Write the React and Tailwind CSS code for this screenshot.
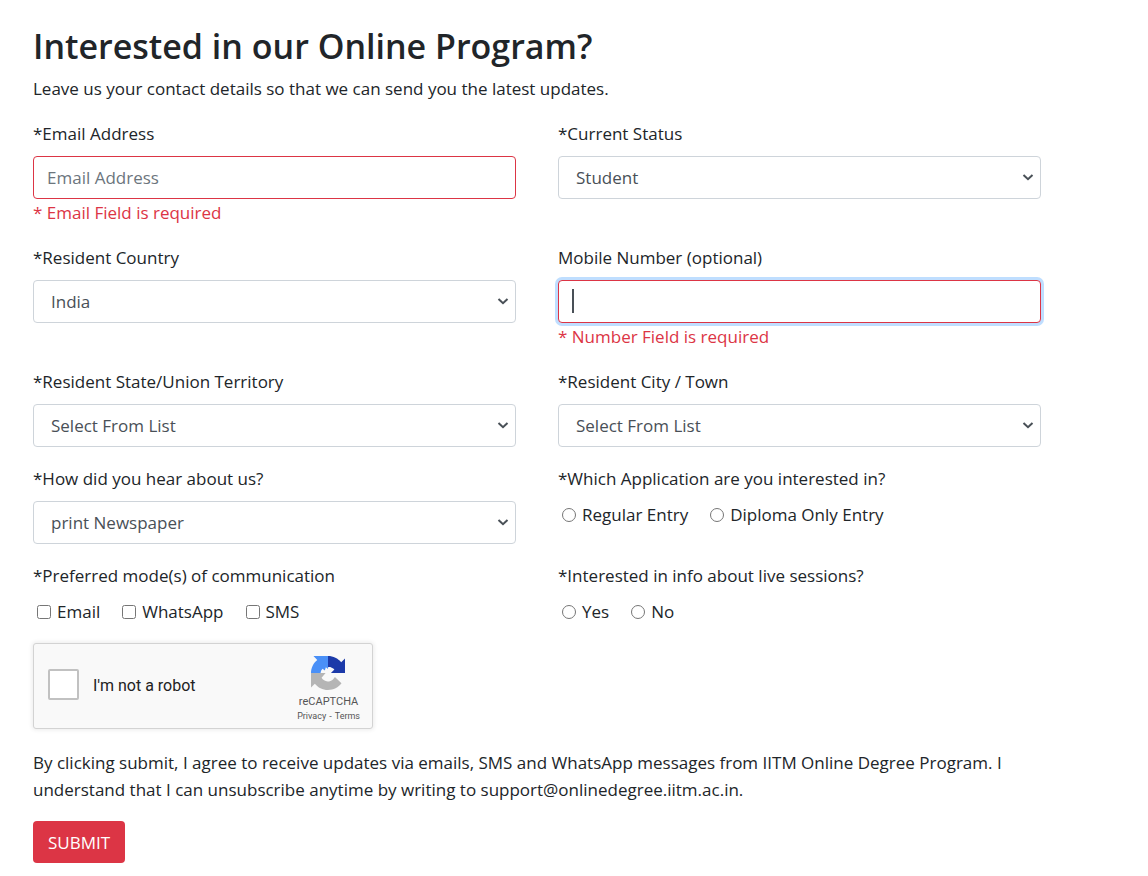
const control =
  "block h-[43px] w-full rounded border bg-white text-[#495057] outline-none";

function Field({ id, label, error, children }) {
  return (
    <div>
      <label htmlFor={id} className="mb-[9px] block">
        {label}
      </label>
      {children}
      {error && <p className="text-[#dc3545]">{error}</p>}
    </div>
  );
}

function SelectField({ id, label, options }) {
  return (
    <Field id={id} label={label}>
      <div className="relative">
        <select id={id} className={`${control} appearance-none border-[#ced4da] px-[17px]`}>
          {options.map((option) => (
            <option key={option}>{option}</option>
          ))}
        </select>
        <svg
          viewBox="0 0 12 8"
          className="pointer-events-none absolute top-[18px] right-[7px] h-2 w-3"
          fill="none"
          stroke="#495057"
          strokeWidth="2"
          aria-hidden="true"
        >
          <path d="M1.5 1L6 5.2L10.5 1" />
        </svg>
      </div>
    </Field>
  );
}

function Choices({ legend, type, name, options }) {
  return (
    <fieldset>
      <legend className="mb-[9px]">{legend}</legend>
      <div className="flex flex-wrap gap-x-[22px] pl-1">
        {options.map((option) => (
          <label key={option} className="flex items-center gap-[6px]">
            <input type={type} name={name} value={option} className="size-[14px]" />
            {option}
          </label>
        ))}
      </div>
    </fieldset>
  );
}

function Captcha() {
  return (
    <div className="flex h-[86px] w-full max-w-[340px] items-center rounded-[3px] border border-[#d3d3d3] bg-[#f9f9f9] pr-3 pl-[14px] font-[Roboto,sans-serif] shadow-[0_0_4px_1px_rgba(0,0,0,0.08)]">
      <label className="flex flex-1 items-center gap-[14px] pb-1 text-base leading-5 text-[#222222]">
        <input
          type="checkbox"
          className="size-[31px] appearance-none rounded-[2px] border-2 border-[#c1c1c1] bg-white"
        />
        <span className="pt-1">I'm not a robot</span>
      </label>
      <div className="flex flex-col items-center pt-[6px] text-[#555555]">
        <svg viewBox="0 0 64 64" className="mr-[2px] size-[34px]" aria-hidden="true">
          <path
            fill="#1c3aa9"
            d="M64 32V4.7l-7.2 7.1C50.9 4.7 42 .1 32 .1V21c1.800 0 3.400-.8 5.200.2 2.600 1.400 5.200 2.200 6.800 4L37.500 32H64z"
          />
          <path
            fill="#4a90f7"
            d="M32 .1H4.600l7.200 7.200C4.600 13.100 0 22 0 32h18c.4-3.200 1.600-5.700 3.800-7.800L26 27.500l2-6.500 4 3.500V.1z"
          />
          <path
            fill="#b5b5b5"
            d="M0 32v27.300l7.200-7.200C13 59.300 21.900 63.900 32 63.900c10.400 0 19.600-5 25.400-12.700L45 39.700c-1.200 2.200-2.800 3.800-4.700 5.300-2.100 1.600-5 2.900-9 2.900-5-.6-9-3.100-11.400-7l7.600-8.900H0z"
          />
        </svg>
        <span className="mt-1 text-[11px] leading-4">reCAPTCHA</span>
        <span className="flex gap-[3px] text-[9px] leading-3">
          <a href="#privacy">Privacy</a>
          <span aria-hidden="true">-</span>
          <a href="#terms">Terms</a>
        </span>
      </div>
    </div>
  );
}

export default function App() {
  return (
    <main className="min-h-screen bg-white pt-6 pr-[107px] pb-3 pl-[33px] font-['Open_Sans','Noto_Sans',sans-serif] text-[17px] leading-[27px] text-[#212529]">
      <h1 className="mb-[6px] text-[34px] leading-[45px] font-semibold">
        Interested in our Online Program?
      </h1>
      <p className="mb-[18px]">
        Leave us your contact details so that we can send you the latest updates.
      </p>

      <form onSubmit={(event) => event.preventDefault()}>
        <div className="grid grid-cols-2 gap-x-[42px] gap-y-[18px]">
          <Field id="email" label="*Email Address" error="* Email Field is required">
            <input
              id="email"
              type="email"
              placeholder="Email Address"
              className={`${control} border-[#dc3545] px-[13px] placeholder:text-[#6c757d]`}
            />
          </Field>
          <SelectField
            id="status"
            label="*Current Status"
            options={["Student", "Working Professional"]}
          />

          <SelectField id="country" label="*Resident Country" options={["India", "Other"]} />
          <Field
            id="mobile"
            label="Mobile Number (optional)"
            error="* Number Field is required"
          >
            <div className="relative">
              <input
                id="mobile"
                type="tel"
                autoFocus
                className={`${control} border-[#dc3545] px-[13px] caret-transparent shadow-[0_0_0_3px_#bfdeff]`}
              />
              <span
                aria-hidden="true"
                className="absolute top-[9px] left-[14px] h-6 w-[2px] bg-[#495057]"
              />
            </div>
          </Field>

          <SelectField
            id="state"
            label="*Resident State/Union Territory"
            options={["Select From List"]}
          />
          <SelectField id="city" label="*Resident City / Town" options={["Select From List"]} />

          <SelectField
            id="source"
            label="*How did you hear about us?"
            options={["print Newspaper"]}
          />
          <Choices
            legend="*Which Application are you interested in?"
            type="radio"
            name="application"
            options={["Regular Entry", "Diploma Only Entry"]}
          />

          <Choices
            legend="*Preferred mode(s) of communication"
            type="checkbox"
            name="mode"
            options={["Email", "WhatsApp", "SMS"]}
          />
          <Choices
            legend="*Interested in info about live sessions?"
            type="radio"
            name="sessions"
            options={["Yes", "No"]}
          />
        </div>

        <div className="mt-[18px] mb-5">
          <Captcha />
        </div>

        <p className="mb-[18px]">
          By clicking submit, I agree to receive updates via emails, SMS and WhatsApp messages
          from IITM Online Degree Program. I understand that I can unsubscribe anytime by writing
          to support@onlinedegree.iitm.ac.in.
        </p>
        <button type="submit" className="h-[42px] rounded bg-[#dc3545] px-[15px] text-white">
          SUBMIT
        </button>
      </form>
    </main>
  );
}
